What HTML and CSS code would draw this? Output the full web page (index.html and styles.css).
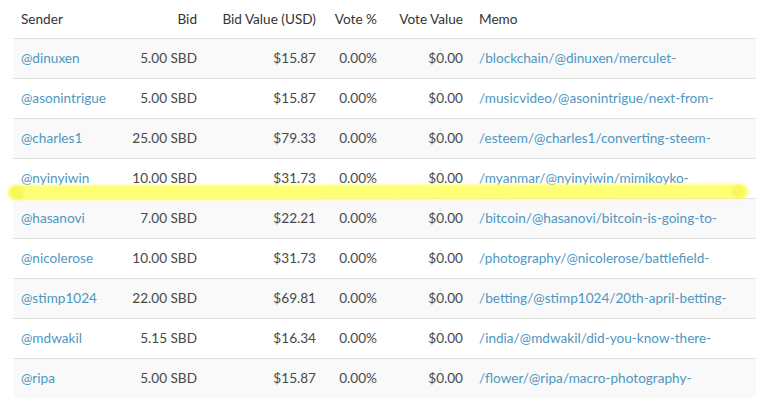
FILE: index.html
```html
<!DOCTYPE html>
<html>
<head>
<meta charset="utf-8">
<link rel="stylesheet" href="styles.css">
</head>
<body>
<div class="wrap">
  <table class="bids">
    <colgroup>
      <col class="c-sender"><col class="c-bid"><col class="c-usd"><col class="c-vote"><col class="c-vval"><col class="c-memo">
    </colgroup>
    <thead>
      <tr><th class="l">Sender</th><th>Bid</th><th>Bid Value (USD)</th><th>Vote %</th><th>Vote Value</th><th class="l">Memo</th></tr>
    </thead>
    <tbody>
      <tr><td class="l"><a>@dinuxen</a></td><td>5.00 SBD</td><td>$15.87</td><td>0.00%</td><td>$0.00</td><td class="l"><a>/blockchain/@dinuxen/merculet-</a></td></tr>
      <tr><td class="l"><a>@asonintrigue</a></td><td>5.00 SBD</td><td>$15.87</td><td>0.00%</td><td>$0.00</td><td class="l"><a>/musicvideo/@asonintrigue/next-from-</a></td></tr>
      <tr><td class="l"><a>@charles1</a></td><td>25.00 SBD</td><td>$79.33</td><td>0.00%</td><td>$0.00</td><td class="l"><a>/esteem/@charles1/converting-steem-</a></td></tr>
      <tr><td class="l"><a>@nyinyiwin</a></td><td>10.00 SBD</td><td>$31.73</td><td>0.00%</td><td>$0.00</td><td class="l"><a>/myanmar/@nyinyiwin/mimikoyko-</a></td></tr>
      <tr><td class="l"><a>@hasanovi</a></td><td>7.00 SBD</td><td>$22.21</td><td>0.00%</td><td>$0.00</td><td class="l"><a>/bitcoin/@hasanovi/bitcoin-is-going-to-</a></td></tr>
      <tr><td class="l"><a>@nicolerose</a></td><td>10.00 SBD</td><td>$31.73</td><td>0.00%</td><td>$0.00</td><td class="l"><a>/photography/@nicolerose/battlefield-</a></td></tr>
      <tr><td class="l"><a>@stimp1024</a></td><td>22.00 SBD</td><td>$69.81</td><td>0.00%</td><td>$0.00</td><td class="l"><a>/betting/@stimp1024/20th-april-betting-</a></td></tr>
      <tr><td class="l"><a>@mdwakil</a></td><td>5.15 SBD</td><td>$16.34</td><td>0.00%</td><td>$0.00</td><td class="l"><a>/india/@mdwakil/did-you-know-there-</a></td></tr>
      <tr><td class="l"><a>@ripa</a></td><td>5.00 SBD</td><td>$15.87</td><td>0.00%</td><td>$0.00</td><td class="l"><a>/flower/@ripa/macro-photography-</a></td></tr>
    </tbody>
  </table>
  <svg class="marker" width="769" height="30" viewBox="0 0 769 30">
    <defs>
      <filter id="soft" x="-5%" y="-50%" width="110%" height="200%">
        <feGaussianBlur stdDeviation="0.8"/>
      </filter>
    </defs>
    <g filter="url(#soft)">
      <line x1="15" y1="15.5" x2="741" y2="14.5" stroke="#ffff66" stroke-opacity="0.9" stroke-width="15" stroke-linecap="round"/>
      <circle cx="17" cy="15.5" r="7.5" fill="#f0f040" fill-opacity="0.45"/>
      <circle cx="738" cy="14.5" r="7" fill="#f0f040" fill-opacity="0.45"/>
    </g>
  </svg>
</div>
</body>
</html>
```
FILE: styles.css
```css
html, body {
  margin: 0;
  padding: 0;
  background: #fff;
}
.wrap {
  position: relative;
  padding: 0 13px;
  font-family: "Lato", "Noto Sans", sans-serif;
  font-size: 13.6px;
  color: #484848;
}
.bids {
  width: 743px;
  border-collapse: collapse;
  table-layout: fixed;
}
.c-sender { width: 106px; }
.c-bid { width: 86px; }
.c-usd { width: 119px; }
.c-vote { width: 61px; }
.c-vval { width: 86px; }
.c-memo { width: 285px; }
.bids th, .bids td {
  padding: 0 8px;
  text-align: right;
  vertical-align: middle;
  white-space: nowrap;
  overflow: hidden;
}
.bids th {
  height: 38px;
  font-weight: normal;
  color: #333;
}
.bids td {
  height: 37px;
  padding-bottom: 2px;
  border-top: 1px solid #e2e2e2;
}
.bids .l { text-align: left; }
.bids tbody tr:nth-child(odd) { background: #f9f9f9; }
.bids a { color: #4f97bf; }
.marker {
  position: absolute;
  left: 0;
  top: 177px;
  pointer-events: none;
}
```
